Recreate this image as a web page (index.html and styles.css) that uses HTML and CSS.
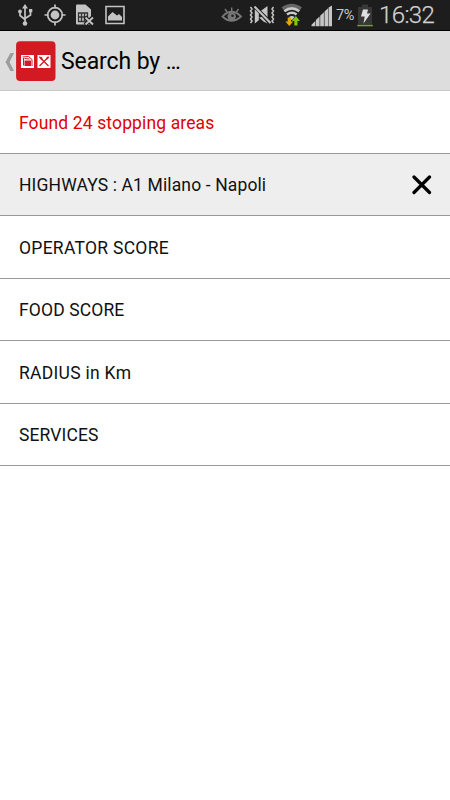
FILE: index.html
```html
<!DOCTYPE html>
<html lang="en">
<head>
<meta charset="utf-8">
<title>Search by</title>
<link rel="stylesheet" href="styles.css">
</head>
<body>
<div class="status">
  <div class="status-left">
    <svg width="18" height="30" viewBox="16 0 18 30"><g fill="none" stroke="#c4c4c4" stroke-width="1.700"><path d="M25 8v15M20 12v3.500l5 4M30.500 11v4l-5.500 3.500"/></g><path d="M25 4l3 4.500h-6z" fill="#c4c4c4"/><circle cx="25" cy="23.500" r="2.300" fill="#c4c4c4"/><circle cx="20" cy="11.500" r="1.900" fill="#c4c4c4"/><path d="M29 9h3.300v3.300h-3.300z" fill="#c4c4c4"/></svg>
    <svg width="22" height="30" viewBox="44 0 22 30"><g fill="none" stroke="#c4c4c4" stroke-width="1.700"><circle cx="55" cy="15" r="7.300"/><path d="M55 4.500v4M55 21.500v4M44.500 15h4M61.500 15h4"/></g><circle cx="55" cy="15" r="4.400" fill="#c4c4c4"/></svg>
    <svg width="20" height="30" viewBox="76 0 20 30"><path d="M77 5.500q0-1 1-1h8.500l5.500 5v15H78q-1 0-1-1z" fill="#c4c4c4"/><path d="M79.500 13h9v8.500h-9zM82.500 13v8.500M85.500 13v8.500M79.500 17h9" fill="none" stroke="#333" stroke-width="1.300"/><path d="M86 17l8 8M94 17l-8 8" stroke="#1d1d1d" stroke-width="4"/><path d="M86.500 17.500l7.500 7M94 17.500l-7.500 7" stroke="#c4c4c4" stroke-width="1.900"/></svg>
    <svg width="20" height="30" viewBox="105 0 20 30"><path d="M106 6.500h18v17h-18z" fill="none" stroke="#c4c4c4" stroke-width="1.600"/><path d="M108 20.500v-4l4.500-4.500 4.500 3.500 2-1.500 3 3v3.500z" fill="#c4c4c4"/></svg>
  </div>
  <div class="status-right">
    <svg width="22" height="30" viewBox="221 0 22 30"><path d="M222.500 16.500Q231.500 7 241 16.500Q231.500 25 222.500 16.500Z" fill="none" stroke="#777" stroke-width="1.800"/><circle cx="231.700" cy="16.500" r="4.200" fill="#777"/><circle cx="232.500" cy="15.800" r="1.300" fill="#222"/><path d="M231.700 7.500v3.500M225 9l2 3M238.500 9l-2 3" stroke="#777" stroke-width="1.500"/></svg>
    <svg width="26" height="30" viewBox="249 0 26 30"><path d="M254.800 8.500l4 3.800v8l-4 3.200zM260 11.500l7.500-5.500v12.500z" fill="#c4c4c4"/><path d="M254.500 6.500l16.500 16.500" stroke="#1d1d1d" stroke-width="3.600"/><path d="M254.500 6.500l16 16.500" stroke="#c4c4c4" stroke-width="2"/><path d="M259 17.500l3-.5 5.500 6.500-4-2z" fill="#c4c4c4"/><path d="M250.500 7l1.500 2-1.500 2 1.500 2-1.500 2 1.500 2-1.500 2 1.500 2-1.500 2M273.500 7l-1.500 2 1.500 2-1.500 2 1.500 2-1.500 2 1.500 2-1.500 2 1.500 2" fill="none" stroke="#c4c4c4" stroke-width="1.500"/></svg>
    <svg width="22" height="30" viewBox="281 0 22 30"><path d="M281.500 7.500Q291.700 0 302 7.500L299.800 10Q291.700 4.500 283.800 10z" fill="#666"/><g fill="none" stroke="#cacaca" stroke-width="2.600"><path d="M284.300 11.200Q291.800 5.500 299.300 11.200"/><path d="M287 14.500Q291.800 11 296.600 14.500"/></g><path d="M289 17Q291.800 14.800 294.600 17l-2.800 3.200z" fill="#cacaca"/><path d="M287.700 17.500h3.300v4h2.200l-3.900 4.500-3.900-4.500h2.300z" fill="#e3a508"/><path d="M294.300 25.500h3.200v-4.500h2.400l-4-5-4 5h2.400z" fill="#82c60b"/></svg>
    <svg width="22" height="30" viewBox="311 0 22 30"><path d="M311.500 26.300v-1.500l3.800-3.800v5.300zM315.900 26.300V20l3.700-3.500v9.800zM320.200 26.300V15.700l3.700-3.400v14zM324.500 26.300V11.500l3.600-3.300v18.100zM328.600 26.300V7.500l3.400-2v20.800z" fill="#c6c6c6"/></svg>
    <span class="percent">7%</span>
    <svg width="17" height="30" viewBox="357 0 17 30"><path d="M358 7h4V4.500h6V7h4v17.500h-14z" fill="#383838"/><path d="M357.300 24.800h15.500v1.500h-15.500z" fill="#79a51c"/><path d="M363 9.500h5l-1 4h3.500l-7 10 1.200-7h-3.700z" fill="#e0e0e0"/></svg>
    <span class="clock">16:32</span>
  </div>
</div>
<header class="bar">
  <svg class="back" width="10" height="20" viewBox="0 0 10 20"><path d="M5.500 1H9L4.500 10 9 19H5.500L.5 10z" fill="#9c9c9c"/></svg>
  <svg class="logo" width="40" height="41" viewBox="0 0 40 41"><rect x=".1" y=".3" width="39.400" height="39.800" rx="4" fill="#d31921"/><path d="M5 14h13v13H5zM21.500 14h13v13h-13z" fill="#fff"/><path d="M8.500 19.500h6.500v5.500H8.500z" fill="#d31921"/><path d="M6.500 16l6-.5 3.500 3V25M7.500 17v7.500M8.500 17.500l5 .5" fill="none" stroke="#d31921" stroke-width="1"/><path d="M23.500 16l9 9M32.500 16l-9 9" stroke="#d31921" stroke-width="1.300"/><path d="M23 15.500l3 .8 1.200 3-2-.3zM29.800 17.500l2.200-2.300 1.200 1.200-2.300 2.300z" fill="#d31921"/></svg>
  <h1>Search by <span class="dots">...</span></h1>
</header>
<main>
  <div class="row found"><span>Found 24 stopping areas</span></div>
  <div class="row short active"><span>HIGHWAYS : A1 Milano - Napoli</span><svg width="20" height="20" viewBox="0 0 20 20"><path d="M2 2l15.500 15.500M17.500 2L2 17.500" stroke="#000" stroke-width="3.200" stroke-linecap="round"/></svg></div>
  <div class="row caps"><span>OPERATOR SCORE</span></div>
  <div class="row short"><span>FOOD SCORE</span></div>
  <div class="row caps"><span>RADIUS in Km</span></div>
  <div class="row short"><span>SERVICES</span></div>
</main>
</body>
</html>
```

FILE: styles.css
```css
* { box-sizing: border-box; }
body { margin: 0; height: 800px; overflow: hidden; background: #fff; color: #111; font-family: Roboto, "Liberation Sans", sans-serif; }
svg { display: block; flex: none; }
.status { height: 31px; background: #1d1d1d; border-bottom: 1px solid #000; display: flex; justify-content: space-between; color: #c8c8c8; }
.status-left { display: flex; padding-left: 16px; gap: 9.5px; }
.status-right { display: flex; align-items: center; width: 229px; gap: 6px; white-space: nowrap; }
.status-right svg:nth-child(4) { margin-left: 2px; }
.percent { width: 19px; margin-left: -3px; font-size: 14.5px; letter-spacing: -.5px; }
.status-right svg:nth-child(6) { margin-left: -4px; }
.clock { margin-left: -1px; font-size: 24px; font-weight: 300; letter-spacing: -.6px; line-height: 30px; color: #d0d0d0; -webkit-text-stroke: .25px #d0d0d0; }
.bar { height: 60px; background: #ddd; border-bottom: 1px solid #c8c8c8; display: flex; align-items: center; padding: 2px 0 0 5px; }
.logo { margin-left: 1px; }
h1 { margin: 0 0 0 5px; font-size: 23px; font-weight: 400; line-height: 30px; letter-spacing: -.1px; color: #000; white-space: pre; }
.dots { letter-spacing: -1.4px; }
.row { height: 63px; padding: 1px 18px 0 19px; border-bottom: 1px solid #999; display: flex; align-items: center; justify-content: space-between; font-size: 17.5px; line-height: 24px; letter-spacing: .13px; white-space: pre; }
.short { height: 62px; }
.caps { letter-spacing: .28px; }
.active { background: #eee; }
.found { color: #e20000; }
```
